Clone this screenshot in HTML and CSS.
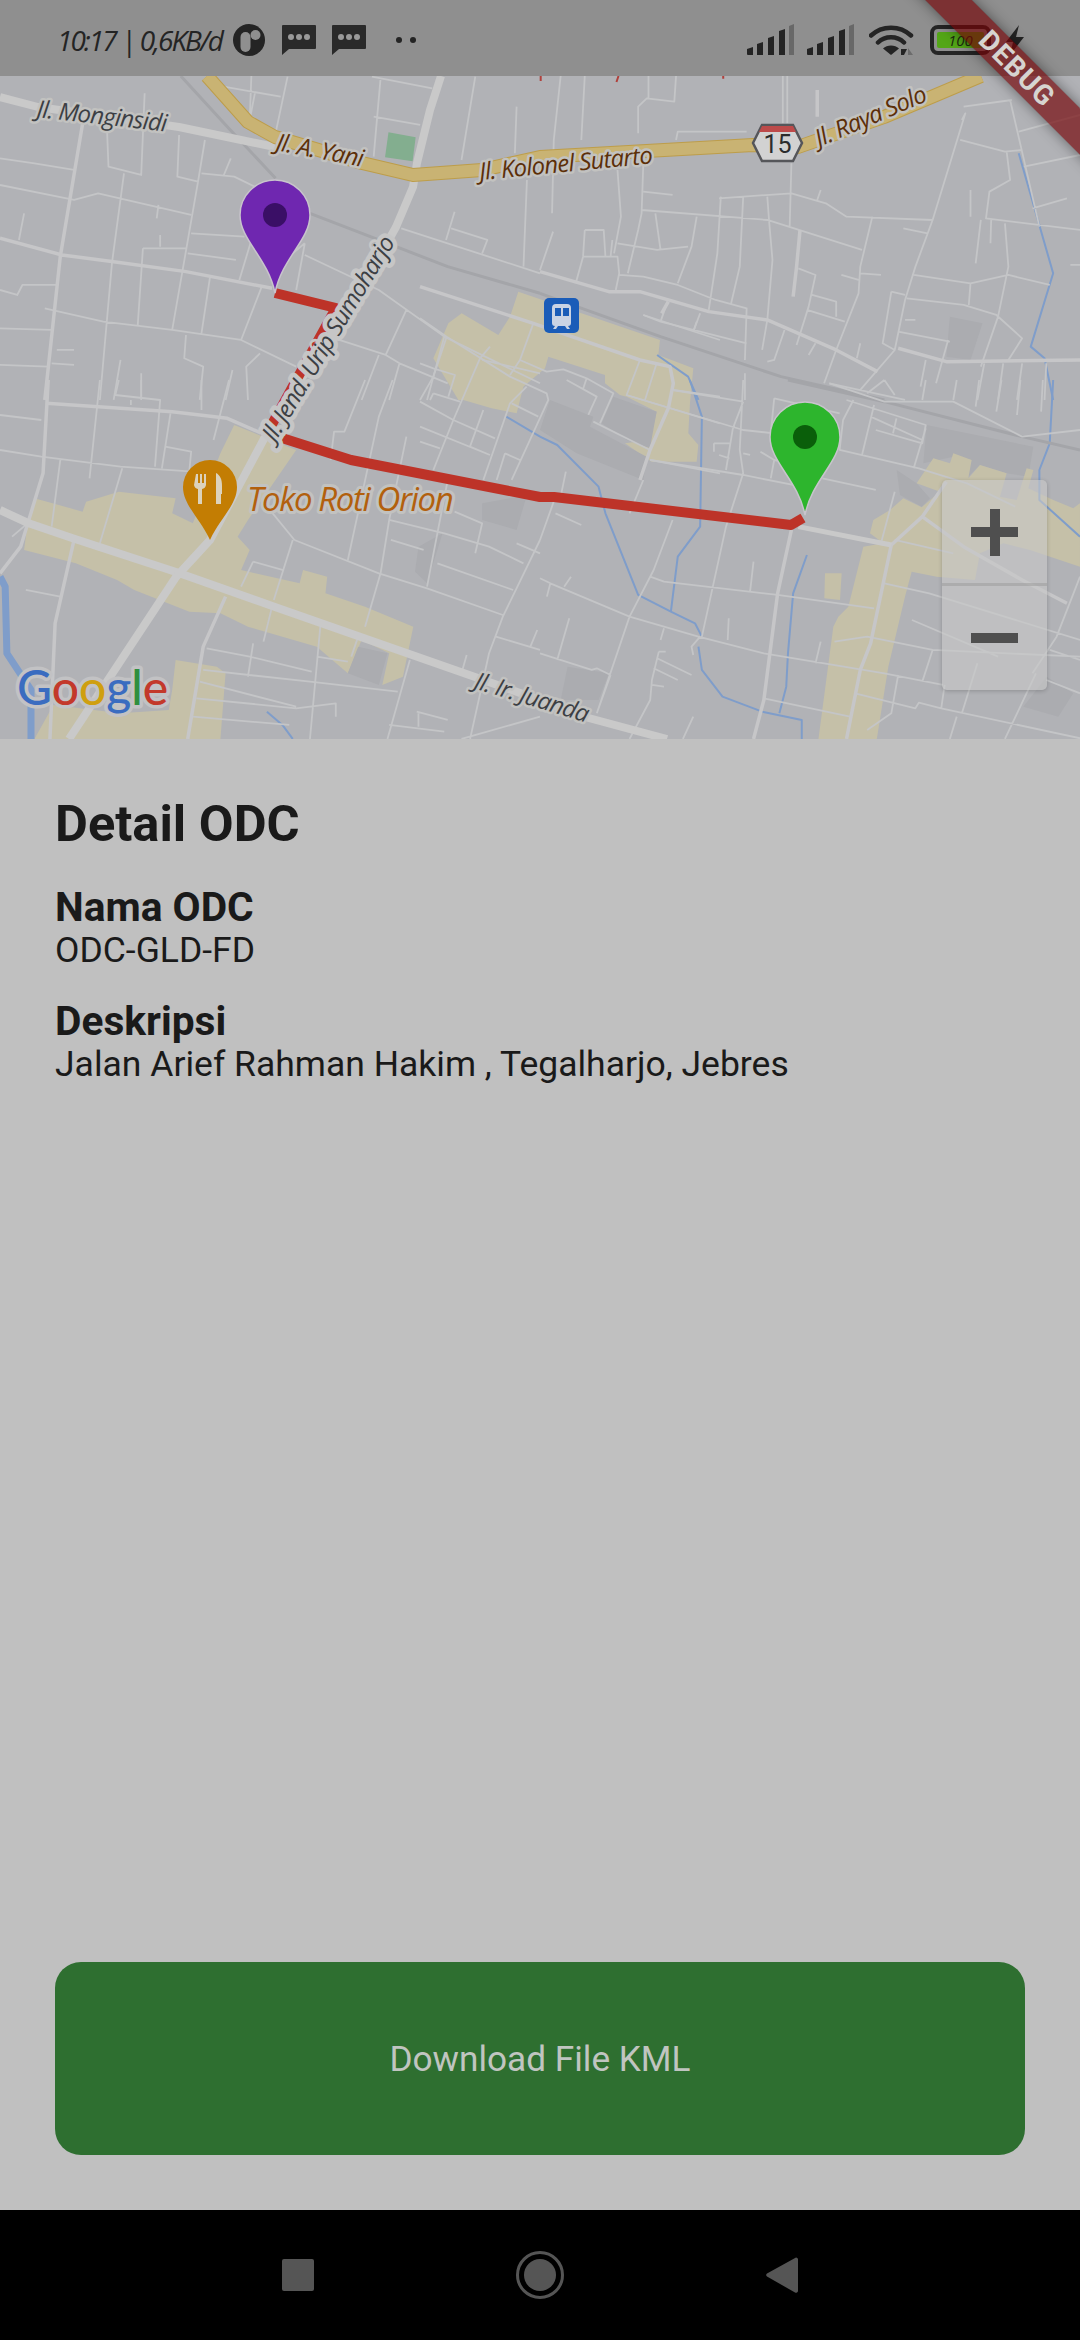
FILE: index.html
```html
<!DOCTYPE html>
<html lang="en">
<head>
  <meta charset="UTF-8" />
  <meta name="viewport" content="width=device-width, initial-scale=1.0" />
  <title>Detail ODC</title>
  <link rel="stylesheet" href="styles.css">
</head>
<body>
  <div class="status-bar">
    <div class="status-left">
      <span class="status-text">10:17 | 0,6KB/d</span>
      <svg class="icon-app" width="32" height="32" viewBox="0 0 32 32">
        <circle cx="16" cy="16" r="16" fill="#242424"/>
        <rect x="7.5" y="8" width="10" height="20" rx="5" fill="#8f8f8f"/>
        <circle cx="22.5" cy="11" r="5" fill="#8f8f8f"/>
      </svg>
      <svg class="icon-msg" width="34" height="30" viewBox="0 0 34 30">
        <path d="M1 0h32a1 1 0 0 1 1 1v22a1 1 0 0 1-1 1H7l-7 6V1a1 1 0 0 1 1-1z" fill="#2a2a2a"/>
        <circle cx="9" cy="12" r="3" fill="#9a9a9a"/><circle cx="17" cy="12" r="3" fill="#9a9a9a"/><circle cx="25" cy="12" r="3" fill="#9a9a9a"/>
      </svg>
      <svg class="icon-msg" width="34" height="30" viewBox="0 0 34 30">
        <path d="M1 0h32a1 1 0 0 1 1 1v22a1 1 0 0 1-1 1H7l-7 6V1a1 1 0 0 1 1-1z" fill="#2a2a2a"/>
        <circle cx="9" cy="12" r="3" fill="#9a9a9a"/><circle cx="17" cy="12" r="3" fill="#9a9a9a"/><circle cx="25" cy="12" r="3" fill="#9a9a9a"/>
      </svg>
      <div class="more-dots"><span></span><span></span></div>
    </div>
    <div class="status-right">
      <svg width="47" height="31" viewBox="0 0 47 31">
        <path d="M0 25l6-2v8H1a1 1 0 0 1-1-1zM10 20l6-2v13h-6zM21 14l6-2v19h-6zM32 7l6-2v26h-6z" fill="#242424"/>
        <path d="M42 2l5-2v31h-5z" fill="#686868"/>
      </svg>
      <svg width="47" height="31" viewBox="0 0 47 31">
        <path d="M0 25l6-2v8H1a1 1 0 0 1-1-1zM10 20l6-2v13h-6zM21 14l6-2v19h-6zM32 7l6-2v26h-6z" fill="#242424"/>
        <path d="M42 2l5-2v31h-5z" fill="#686868"/>
      </svg>
      <svg class="icon-wifi" width="46" height="32" viewBox="0 0 46 32">
        <path d="M2 11.500C13 1 31 1 42 11.500M9 18.500C16 11.500 28 11.500 35 18.500" fill="none" stroke="#242424" stroke-width="4.500" stroke-linecap="round"/>
        <path d="M14 24.500C18 20.500 26 20.500 30 24.500L22 31z" fill="#242424"/>
        <path d="M32 25h6l-3 6h-3z" fill="#242424"/>
        <path d="M39 31v-7l5 7z" fill="#6c6c6c"/>
      </svg>
      <div class="battery"><div class="battery-level">100</div></div>
      <svg class="icon-bolt" width="18" height="30" viewBox="0 0 18 30">
        <path d="M13 0L0 17h7L4 30 18 12h-8z" fill="#242424"/>
      </svg>
    </div>
  </div>

  <div class="map">
    <svg class="map-canvas" width="1080" height="663" viewBox="0 76 1080 663">
      <rect x="0" y="76" width="1080" height="663" class="land"/>

      <!-- built up area, middle -->
      <g transform="translate(420 280) scale(.3333)">
        <path class="tan" d="M295 35L720 180 715 225 820 265 810 370 805 460 835 495 830 545 695 545 615 490 690 480 710 395 620 350 600 345 555 310V285L385 230 375 265 310 320 290 400 215 385 130 360H115L40 235 85 130 125 100 235 165 270 110z"/>
        <path class="block" d="M390 360L520 410 510 440 680 530 670 600 470 520 360 450zM580 350L710 395 690 505 620 480 545 430z"/>
      </g>

      <!-- built up area, right -->
      <g transform="translate(790 420) scale(.3333)">
        <path class="block" d="M410 15L730 80 715 170 650 160 570 135 535 170 490 110 400 130zM320 150L380 190 420 235 395 260 330 225zM700 860L770 770 850 820 805 890z"/>
        <path class="tan" d="M380 190L430 115 480 130 490 100 545 120 535 175 570 135 650 160 630 230 680 240 710 145 730 150 715 205 790 240 850 265 870 250V440L720 390 640 370 570 400 555 480 440 470 365 455 345 530 295 740 260 960H85L130 620 145 590 175 560 220 380 280 370 240 340 250 300 300 270 340 235 395 262 450 215zM105 460H155L150 540 103 535z"/>
      </g>

      <!-- top left -->
      <g transform="scale(.3444 .3333)">
        <path class="rail" d="M525 228L660 380 800 535M900 640L1100 720 1300 800 1568 880"/>
        <path class="minor" d="M310 370L315 500 410 525 420 280M360 520L325 790 290 1200M595 420L575 545 500 990M520 405L515 530 575 545M585 520L680 530 770 575M650 525L670 475M730 225L725 360M650 260L815 290M740 280L725 360M835 230L800 400M1105 235L1085 470M1085 350L1220 375M1080 230L1255 265M1380 230L1340 480M1500 320L1495 460M555 700L710 710M415 745H540M415 745L400 975M545 760L685 780M465 705V740M460 615L455 655M70 640L55 720M730 720L695 840M885 730L860 870M885 730L850 760M885 765L1100 870 1290 1010 1568 1150M1165 685L1568 820M1320 635L1295 720M1310 685L1415 720 1400 760M1530 540L1520 800M0 870L50 885 65 855H165M610 830L585 1000M760 860L700 1020M130 925L300 965 500 990 700 1020 860 1100M0 985L150 990M165 1050H215M150 1090L215 1095M0 1095L140 1100M540 1005L535 1075 590 1100 580 1200M350 1080L330 1200M410 1120V1200M675 1110L655 1200M755 1060L715 1100 720 1200M985 1020L1120 1065 1160 1090 1300 1150M1180 930L1120 1065M1100 1065L1050 1200M1160 1090L1130 1200M1290 1010L1240 1200M1400 1080L1568 1120M0 475L100 490 215 510M0 555L215 600 285 580 555 645"/>
        <path class="medium" d="M240 370L175 770 130 1200M0 715L180 765 330 785 540 815 790 865"/>
        <path class="block-green" d="M1128 397L1207 412 1198 484 1118 472z"/>
      </g>

      <!-- top right -->
      <g transform="translate(540 0) scale(.3444 .3333)">
        <path class="block" d="M1190 950L1285 970 1250 1080 1180 1070z"/>
        <path class="river" d="M1390 460L1440 640 1490 820 1425 1040 1465 1075 1490 1200M340 1065L430 1130 460 1200"/>
        <path class="rail" d="M0 880L350 1010 700 1130 1000 1200"/>
        <path class="minor" d="M705 228V370M718 228V370M395 420L400 395H600M285 400V320L310 295 390 305 395 228M315 228V295M130 228L120 420M60 228L40 420 35 640M38 695L0 810M225 510L235 650 215 760M300 490L295 640 285 690 255 820M300 575L385 585M295 630L660 660 935 750M335 640L350 750M225 730L340 750 430 740M455 650L440 740 400 850M525 590L515 760 490 930M590 590L580 800 555 910M520 595L730 580 830 610 890 650 1140 660M660 590L665 660 675 780 660 960 645 1050M730 490L725 680M815 570L805 600M750 805L800 825 780 920 745 1035M790 885L860 905V950M775 930L885 965M965 650L930 800 925 880 860 1050 825 1150M875 825L925 840M930 820L990 825M1225 360L1235 340 1140 660 1090 800 1060 900 1030 1050 930 1170M1230 320L1370 300M1220 420L1350 455 1400 450M1365 300L1450 680M1390 395L1568 345M1405 500L1568 465M1430 625L1530 595M1355 455L1365 540 1305 575 1295 655 1568 690M1055 685L1125 700M1250 570V650M1280 660L1265 790M1310 660L1308 730M1350 670L1360 800 1330 950 1280 1100M1085 825L1250 850 1360 825 1480 855M1250 850L1245 915M1065 895L1230 915 1325 945 1400 1015 1360 1080M1060 960H1090M1040 995L1190 1025M1020 875L1060 885M1020 875L995 1030 1030 1050M1185 1020L1150 1150M1120 1080L1105 1160M1290 1090L1270 1200M1345 1090L1330 1200M1400 1090L1385 1200M1470 1090L1465 1200M130 690L125 770 105 845M130 690H185L190 770M125 770H225L230 820 220 870M210 720L205 770M230 825L300 830 400 855 510 900 600 925 595 1080M370 905L350 965 600 1030M300 945L350 965M465 940L445 995M710 990L680 1080 660 1085M800 1030L780 1065M595 1120V1200M840 1150L1060 1200M930 1030L920 1075M1540 795H1568"/>
        <path class="medium" d="M805 270V350M755 690L745 800 735 890M1040 1045L1180 1085 1568 1080"/>
        <path class="medium" d="M0 815L200 875H290L490 935 660 960 860 1050 980 1115"/>
        <path class="clipped-label" d="M2 228V243M228 228L222 246M532 228V236"/>
      </g>

      <!-- bottom left -->
      <g transform="translate(0 380) scale(.3444 .3333)">
        <path class="tan" d="M100 355L240 395 250 365 345 335 510 355 500 400 560 430 640 220 680 135 860 210 720 420 690 470 725 510 700 570 870 610 880 570 950 590 945 640 1060 680 1200 740 1170 890 1110 915 1130 820 1050 780 1010 880 920 800 720 740 640 700 550 695 390 630 340 600 220 550 70 510 80 430z"/>
        <path class="tan" d="M510 840L630 860 655 880 640 1077H100L155 975 350 1000 490 990 500 930z"/>
        <path class="block" d="M1400 370L1530 345 1500 450 1400 420zM1215 500L1285 460 1240 610 1205 575zM1040 800L1125 820 1100 915 1010 880z"/>
        <path class="river river-wide" d="M0 590L15 620 20 820 90 930V1077"/>
        <path class="river" d="M775 995L820 1035 850 1077M1470 110L1568 170"/>
        <path class="minor" d="M0 105L120 120M0 210L120 230 350 260 560 275M290 0L260 295M345 0L335 45 465 60 450 260M410 0V50M380 60V75M585 0V90M665 0L620 180M495 100L470 265M480 200L555 215 550 270M175 240L150 440M355 265L290 490M80 430L35 470M75 630L175 650M600 805L725 830 905 875M735 790L720 890M590 870L900 905 1155 935M580 905L860 980M570 955L860 985 975 970V1010M560 1010L840 1035M930 740L900 1077M920 830L1010 845M1040 770L1020 830M1190 840L1125 1077M1210 995L1300 1020M1215 1000V1040M1130 1035L1290 1055M1355 825L1340 880M1568 480L1460 710 1420 820 1365 1077M1440 770L1568 810M1560 750L1540 800M1500 490L1568 520M790 680L765 785M735 545L700 620M735 545L820 570M850 480L795 660M1105 580L1060 740M855 480L1100 580 1240 625 1460 705M780 385L855 480M960 240L970 155H1000L1060 0M1140 0L1100 110 1010 540M1180 170L1130 420 1105 580M1300 300L1240 620M1135 480L1230 510M1130 420L1290 460 1420 500 1520 550M1320 395L1400 430 1380 520M1270 550L1490 630M1340 1077L1568 1010"/>
        <path class="medium" d="M215 480L160 730 145 1077M655 650L590 800 545 1077M140 0L125 280 60 500 0 580M135 70L500 95 660 115 760 160"/>
      </g>

      <!-- bottom right -->
      <g transform="translate(540 380) scale(.3444 .3333)">
        <path class="block" d="M80 860L200 880 170 960 60 960z"/>
        <path class="river" d="M0 170L50 195 170 320 190 400 285 645 380 695 450 730 470 770M435 0L470 110 465 440 400 530 380 695M775 525L735 640 720 820 715 920 695 1000M460 800L470 870 530 950 645 995 760 1020V1077M1490 0L1480 190 1450 270V360L1568 470"/>
        <path class="rail" d="M720 0L1000 65 1400 170 1568 210"/>
        <path class="minor" d="M250 45L590 150 680 160M300 300L260 400M385 30L590 65M590 0L580 210 590 280 540 440 470 770M320 240L590 285 735 315M385 420L330 570 260 710 165 1000M45 350L0 480M75 275L60 350M45 400L120 435M320 590L360 605 690 645 970 685M620 545L610 635M0 595L30 610 260 710 460 770 650 820 1000 880 1170 915M90 590L70 620M30 610L20 650M0 820L150 870 165 865 205 885M85 715L50 840M205 885L165 1000M360 745L350 780M548 715L545 780M815 785L800 850M650 955L900 1010M345 815L325 900 320 960 260 1077M345 815H365M340 835L440 885M330 865L400 900M325 915L360 920M445 1010L415 1077M465 770L440 800 445 825M890 60L1120 135 1110 190 975 150M910 60L880 120 870 210 1100 265 1240 310 1380 380M970 75L935 225M1035 115L1025 160M960 110L1110 180M1120 145L1085 265M1210 0L1200 60M1275 0L1265 80M1340 0L1325 95M1395 0L1385 105M1460 0L1455 95M840 10L1000 65 1200 65 1400 170 1568 150M1000 0L1030 45M1120 0L1110 60M950 40L1000 0M680 55L670 160M680 55L870 100M560 145L540 270M590 65L560 145M505 190V215M505 190H550M520 225L550 235M590 220L610 225M640 215L680 240 730 250M680 240L670 295M820 295L975 330M1030 335L990 490M1030 480L1200 520M1000 610L1130 640 1568 780M855 785L950 770 1140 810 1568 830M1080 720L1330 830M1140 810L1110 905M915 940L1090 985 1100 968 1165 985 1568 1075M1040 885L1020 1000 950 1050M1175 915L1165 985M1210 1010L1190 1077M1270 850L1225 1000M1440 880L1350 1077M1568 590L1500 770 1430 880M1480 810L1568 840M1470 900L1568 940"/>
        <path class="medium" d="M730 450L690 640 650 960 620 1077M1020 495L1110 410 1180 305M1020 495L960 790 930 870 890 1077M1110 410L1230 500 1400 600 1530 670"/>
        <path class="medium road-grey" d="M750 440L1020 495"/>
      </g>

      <!-- streets around the middle area -->
      <g transform="translate(420 280) scale(.3333)">
        <path class="minor" d="M340 130L300 240 270 285M0 115L80 170 270 290 380 340 385 360 330 480 275 600M80 170L40 290 0 360M210 200L180 235 100 420 40 570M300 240L380 275 430 268 500 295 580 340 540 430M500 295L490 325M440 300L530 350 505 405M660 240L620 345 900 430M710 250L675 360M760 330L900 350M520 425L690 510M320 320L270 370 190 600M0 365L100 420 225 475M275 370L355 410M190 390L150 500 210 525M0 440L210 525M0 485L60 505M690 540L900 580M255 520L230 600M255 520L300 540M40 340L120 365M40 340L30 360M0 250L40 265 105 285 85 350M670 105L900 180M830 125L820 155"/>
        <path class="medium" d="M0 20L340 130 660 240 750 260 760 310 745 385 690 510 660 600M725 100L745 65"/>
      </g>

      <path class="major" d="M0 97L38 107 179 127 275 147"/>
      <path class="major" d="M0 510L28 523 72 538 176 572 275 607 475 677 540 700 585 717 667 739"/>
      <path class="major" d="M441 76L430 110 417 163 413 187 396 227 344 320 286 400 265 437 210 540 176 577 69 739"/>
      <path class="arterial-edge" d="M207 76L248 122 275 137 362 163 413 175 482 170 540 157 753 145 798 147 884 117 981 76"/>
      <path class="arterial" d="M207 76L248 122 275 137 362 163 413 175 482 170 540 157 753 145 798 147 884 117 981 76"/>

      <path class="route" d="M275 293L336 308 265 437"/>
      <path class="route" d="M282 438L351 460 540 497 554 497 791 525 803 518"/>

      <text class="label label-grey" transform="translate(36 117) rotate(6.400)">Jl. Monginsidi</text>
      <text class="label label-brown" transform="translate(275 150) rotate(11)">Jl. A. Yani</text>
      <text class="label label-brown" transform="translate(480 180) rotate(-5.500)">Jl. Kolonel Sutarto</text>
      <text class="label label-brown" transform="translate(819 147) rotate(-23)">Jl. Raya Solo</text>
      <text class="label label-grey label-road" transform="translate(275 443) rotate(-59)">Jl. Jend. Urip Sumoharjo</text>
      <text class="label label-grey" transform="translate(473 688) rotate(17)">Jl. Ir. Juanda</text>

      <!-- road shield -->
      <path class="shield" d="M753 143L762 125H793L802 143 793 161H762z"/>
      <path class="shield-top" d="M762 126H793L796 132H759z"/>
      <text class="shield-text" x="777.500" y="153">15</text>

      <!-- train station -->
      <rect x="544" y="298" width="35" height="35" rx="5" class="train-bg"/>
      <path class="train-body" d="M556 304h11a4 4 0 0 1 4 4v15a3 3 0 0 1-3 3l2 3h-3l-2-3h-7l-2 3h-3l2-3a3 3 0 0 1-3-3v-15a4 4 0 0 1 4-4z"/>
      <path class="train-window" d="M555 308h6v8h-6zM563 308h6v8h-6z"/>

      <!-- food place -->
      <path class="poi-pin" d="M210 460A27 27 0 0 1 237 487C237 505 220 518 210 540 200 518 183 505 183 487A27 27 0 0 1 210 460z"/>
      <path class="poi-icon" d="M196 474h2v9h2v-9h2v9h2v-9h2v11a5 5 0 0 1-4 4v15h-4v-15a5 5 0 0 1-4-4zM216 473c4 2 6 6 6 13v8h-1v10h-5z" />
      <text class="poi-label" x="247" y="511">Toko Roti Orion</text>

      <text class="google-logo" x="17" y="705"><tspan class="g-blue">G</tspan><tspan class="g-red">o</tspan><tspan class="g-yellow">o</tspan><tspan class="g-blue">g</tspan><tspan class="g-green">l</tspan><tspan class="g-red">e</tspan></text>

      <!-- markers -->
      <path class="pin pin-purple" d="M275 180A35 35 0 0 1 310 215C310 240 282 258 275 293 268 258 240 240 240 215A35 35 0 0 1 275 180z"/>
      <circle cx="275" cy="215" r="12" class="pin-dot-purple"/>
      <path class="pin pin-green" d="M805 402A35 35 0 0 1 840 437C840 462 812 480 805 515 798 480 770 462 770 437A35 35 0 0 1 805 402z"/>
      <circle cx="805" cy="437" r="12" class="pin-dot-green"/>
    </svg>

    <div class="zoom-controls">
      <div class="zoom-btn zoom-in"><span class="bar-h"></span><span class="bar-v"></span></div>
      <div class="zoom-btn"><span class="bar-h"></span></div>
    </div>
  </div>

  <div class="detail">
    <div class="info">
      <h1>Detail ODC</h1>
      <div class="label-title">Nama ODC</div>
      <div class="value">ODC-GLD-FD</div>
      <div class="label-title second">Deskripsi</div>
      <div class="value">Jalan Arief Rahman Hakim , Tegalharjo, Jebres</div>
    </div>
    <div class="btn-download">Download File KML</div>
  </div>

  <div class="nav-bar">
    <span class="nav-square"></span>
    <span class="nav-home"><span></span></span>
    <svg width="32" height="36" viewBox="0 0 32 36"><path d="M30 0.500a2 2 0 0 1 2 1.500v32a2 2 0 0 1-3 1.500L1 19.500a2 2 0 0 1 0-3z" fill="#555"/></svg>
  </div>

  <div class="debug-corner">
    <div class="debug-banner">DEBUG</div>
  </div>
</body>
</html>
```

FILE: styles.css
```css
* {
  box-sizing: border-box;
}

body {
  margin: 0;
  width: 1080px;
  height: 2340px;
  display: flex;
  flex-direction: column;
  position: relative;
  overflow: hidden;
  font-family: Roboto, sans-serif;
  background-color: #c0c0c0;
}

/* status bar */
.status-bar {
  height: 76px;
  flex: none;
  display: flex;
  justify-content: space-between;
  align-items: center;
  padding: 17px 56px 14px 57px;
  background-color: #8f8f8f;
  color: #242424;
}

.status-left,
.status-right {
  display: flex;
  align-items: center;
}

.status-text {
  font-family: "Open Sans", sans-serif;
  font-style: italic;
  font-size: 28px;
  letter-spacing: -2px;
  white-space: nowrap;
  width: 176px;
}

.icon-app {
  margin-right: 17px;
}

.icon-msg {
  margin-right: 16px;
}

.more-dots {
  display: flex;
  gap: 8px;
  margin-left: 14px;
}

.more-dots span {
  width: 6px;
  height: 6px;
  border-radius: 50%;
  background-color: #242424;
}

.status-right svg {
  margin-right: 13px;
}

.status-right .icon-wifi {
  margin: 0 15px 0 2px;
}

.status-right .icon-bolt {
  margin: 0 0 0 15px;
}

.battery {
  width: 61px;
  height: 30px;
  padding: 3px;
  border: 4px solid #252525;
  border-radius: 8px;
}

.battery-level {
  height: 100%;
  background-color: #53a617;
  border-radius: 2px;
  text-align: center;
  font-family: "Open Sans", sans-serif;
  font-style: italic;
  font-size: 15px;
  line-height: 16px;
  color: #1c2a10;
}

/* map */
.map {
  height: 663px;
  flex: none;
  position: relative;
  overflow: hidden;
}

.map-canvas {
  display: block;
}

.map-canvas path {
  vector-effect: non-scaling-stroke;
}

.land {
  fill: #b1b2b6;
}

.tan {
  fill: #c5c0a8;
}

.block {
  fill: #abacb0;
}

.block-green {
  fill: #83ae8f;
}

.river,
.rail,
.minor,
.medium,
.major,
.arterial,
.arterial-edge,
.route,
.clipped-label {
  fill: none;
  stroke-linejoin: round;
}

.clipped-label {
  stroke: #b0413c;
  stroke-width: 2px;
}

.river {
  stroke: #7f9dca;
  stroke-width: 2px;
}

.river-wide {
  stroke-width: 7px;
}

.rail {
  stroke: #a4a5a9;
  stroke-width: 3px;
}

.minor {
  stroke: #c4c5c7;
  stroke-width: 1.800px;
}

.medium {
  stroke: #c6c6c8;
  stroke-width: 3.500px;
}

.road-grey {
  stroke: #c9c9c9;
  stroke-width: 5px;
}

.major {
  stroke: #c9c9c9;
  stroke-width: 8px;
}

.arterial-edge {
  stroke: #bd9d4a;
  stroke-width: 14px;
}

.arterial {
  stroke: #c9b373;
  stroke-width: 12px;
}

.route {
  stroke: #bd3328;
  stroke-width: 10px;
}

.label {
  font-family: "Open Sans", sans-serif;
  font-style: italic;
  font-size: 24px;
  letter-spacing: -0.750px;
  paint-order: stroke;
  stroke: #c2c2c0;
  stroke-width: 5px;
  stroke-linejoin: round;
}

.label-grey {
  fill: #3c3f44;
}

.label-brown {
  fill: #5c2f08;
}

.label-road {
  stroke: #c6c6c6;
  stroke-width: 9px;
}

.shield {
  fill: #d2d2d2;
  stroke: #55565a;
  stroke-width: 2.500px;
}

.shield-top {
  fill: #bd4a4a;
}

.shield-text {
  font-family: Roboto, sans-serif;
  font-size: 25px;
  text-anchor: middle;
  fill: #2c2c2c;
}

.train-bg {
  fill: #1a5cb8;
}

.train-body {
  fill: #c9d3e4;
}

.train-window {
  fill: #1a5cb8;
}

.poi-pin {
  fill: #c37d03;
}

.poi-icon {
  fill: #dcd2bc;
}

.poi-label {
  font-family: "Open Sans", sans-serif;
  font-style: italic;
  font-size: 33px;
  letter-spacing: -1.400px;
  fill: #b2600d;
  paint-order: stroke;
  stroke: #c2c2c0;
  stroke-width: 6px;
  stroke-linejoin: round;
}

.google-logo {
  font-family: Lato, sans-serif;
  font-size: 48px;
  font-weight: 500;
  paint-order: stroke;
  stroke: #c2c2c4;
  stroke-width: 7px;
  stroke-linejoin: round;
}

.g-blue {
  fill: #3a6cc0;
}

.g-red {
  fill: #c3392b;
}

.g-yellow {
  fill: #cf9f0f;
}

.g-green {
  fill: #2f8f3f;
}

.pin {
  stroke: #c8c4cc;
  stroke-width: 1.500px;
}

.pin-purple {
  fill: #6f27b0;
}

.pin-green {
  fill: #2db52d;
}

.pin-dot-purple {
  fill: #3a0f66;
}

.pin-dot-green {
  fill: #0a5f0a;
}

.zoom-controls {
  position: absolute;
  left: 942px;
  top: 404px;
  width: 105px;
  height: 210px;
  border-radius: 5px;
  background-color: rgba(200, 200, 200, 0.6);
  box-shadow: 0 1px 4px rgba(0, 0, 0, 0.2);
}

.zoom-btn {
  height: 104px;
  position: relative;
}

.zoom-in {
  height: 106px;
  border-bottom: 3px solid rgba(160, 160, 160, 0.6);
}

.bar-h {
  position: absolute;
  left: 29px;
  top: 47px;
  width: 47px;
  height: 10px;
  background-color: #4f4f4f;
}

.bar-v {
  position: absolute;
  left: 48px;
  top: 29px;
  width: 10px;
  height: 47px;
  background-color: #4f4f4f;
}

/* detail */
.detail {
  flex: 1;
  display: flex;
  flex-direction: column;
  justify-content: space-between;
  padding: 57px 55px 55px;
  color: #1a1a1a;
}

.detail h1 {
  margin: 0 0 32px;
  font-size: 50.600px;
  line-height: 56px;
  font-weight: 700;
}

.label-title {
  font-size: 40.700px;
  line-height: 47px;
  font-weight: 700;
}

.label-title.second {
  margin-top: 28px;
}

.value {
  font-size: 35.500px;
  line-height: 39px;
}

.btn-download {
  height: 193px;
  display: flex;
  justify-content: center;
  align-items: center;
  border-radius: 26px;
  background-color: #2e6f30;
  color: #c0c5c0;
  font-size: 35.200px;
}

/* navigation */
.nav-bar {
  height: 130px;
  flex: none;
  display: flex;
  justify-content: center;
  align-items: center;
  gap: 202px;
  background-color: #000;
}

.nav-square {
  width: 32px;
  height: 32px;
  border-radius: 2px;
  background-color: #555;
}

.nav-home {
  width: 48px;
  height: 48px;
  padding: 5px;
  border: 3px solid #555;
  border-radius: 50%;
}

.nav-home span {
  display: block;
  width: 100%;
  height: 100%;
  border-radius: 50%;
  background-color: #555;
}

/* flutter debug ribbon */
.debug-corner {
  position: absolute;
  top: 0;
  right: 0;
  width: 200px;
  height: 200px;
  overflow: hidden;
}

.debug-banner {
  position: absolute;
  left: -13px;
  top: 52px;
  width: 300px;
  height: 33px;
  transform: rotate(45deg);
  display: flex;
  justify-content: center;
  align-items: center;
  background-color: rgba(115, 5, 8, 0.68);
  box-shadow: 0 0 14px rgba(0, 0, 0, 0.45);
  color: #d6d4d0;
  font-size: 28px;
  font-weight: 700;
  letter-spacing: 1px;
}
```
